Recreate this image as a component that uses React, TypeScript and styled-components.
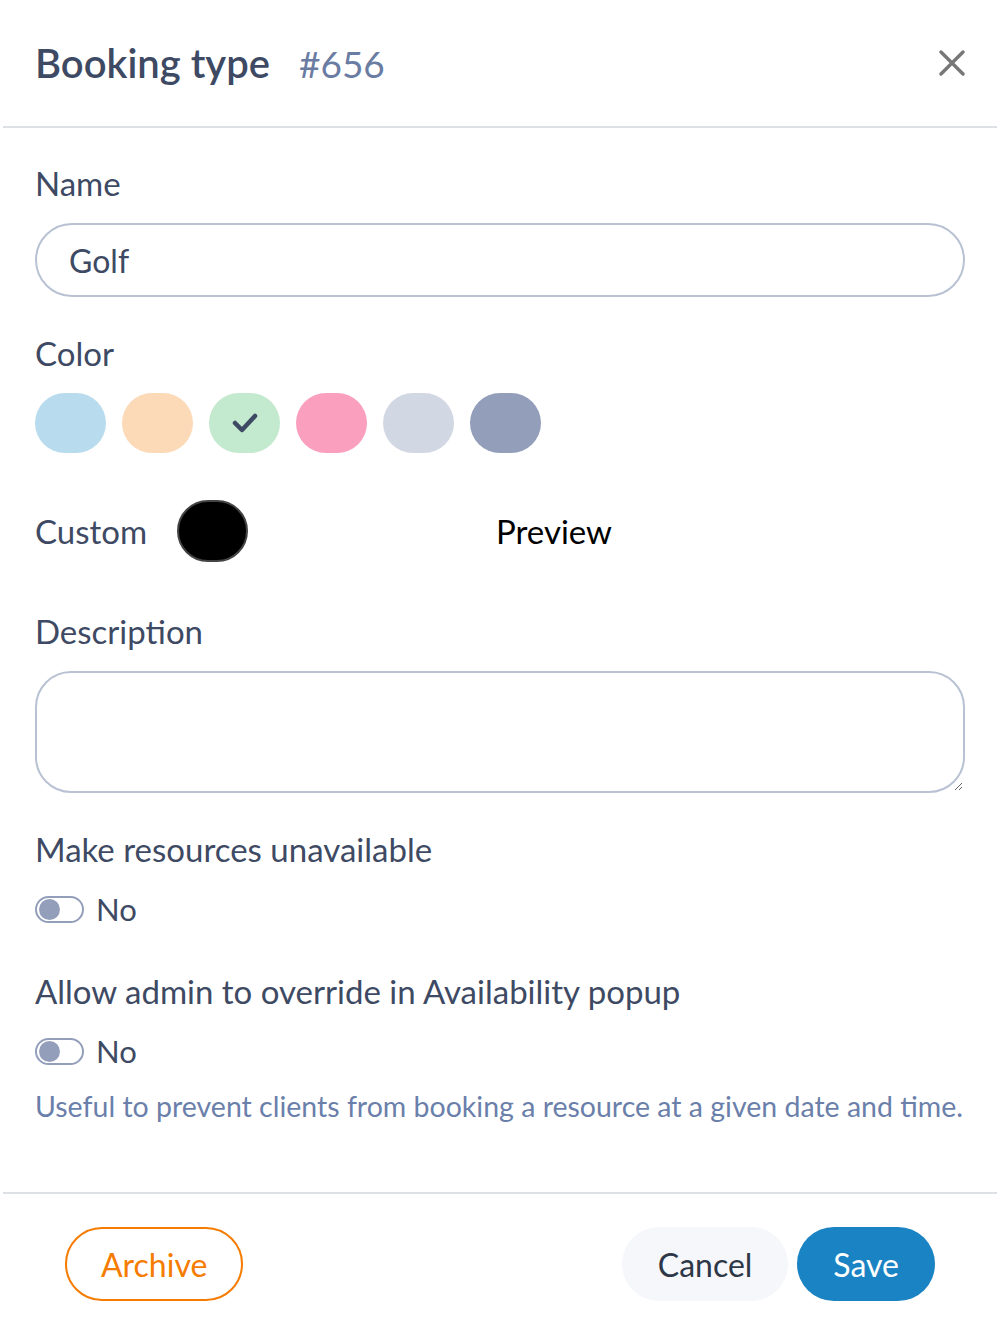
import React from "react";
import styled, { createGlobalStyle } from "styled-components";

const GlobalStyle = createGlobalStyle`
  html, body {
    margin: 0;
    padding: 0;
    background: #ffffff;
  }
  body {
    font-family: Lato, "Noto Sans", sans-serif;
    color: #3e4a63;
  }
  * {
    box-sizing: border-box;
  }
`;

const Modal = styled.div`
  width: 1000px;
  background: #ffffff;
`;

const Header = styled.header`
  height: 126px;
  padding: 0 35px;
  display: flex;
  align-items: center;
  justify-content: space-between;
`;

const TitleGroup = styled.div`
  display: flex;
  align-items: baseline;
  gap: 29px;
`;

const Title = styled.h2`
  margin: 0;
  font-size: 40px;
  font-weight: 600;
  color: #3e4a63;
`;

const TitleId = styled.span`
  font-size: 37px;
  font-weight: 400;
  color: #6b7ca3;
`;

const CloseButton = styled.button`
  border: none;
  background: none;
  padding: 0;
  width: 30px;
  height: 30px;
  margin-right: -2px;
  display: flex;
  align-items: center;
  justify-content: center;
  cursor: pointer;
`;

const Divider = styled.hr`
  margin: 0 3px;
  border: none;
  height: 2px;
  background: #dde1e6;
`;

const Body = styled.div`
  padding: 35px 35px 68px;
  display: flex;
  flex-direction: column;
`;

const Label = styled.div<{ $top?: number }>`
  font-size: 33px;
  line-height: 40px;
  height: 40px;
  color: #3e4a63;
  white-space: nowrap;
  margin-top: ${(p) => p.$top ?? 0}px;
`;

const TextInput = styled.input`
  margin-top: 20px;
  width: 100%;
  height: 74px;
  border: 2px solid #b8c2d3;
  border-radius: 37px;
  padding: 0 32px;
  font-family: inherit;
  font-size: 32px;
  color: #3e4a63;
  outline: none;
  background: #fff;
`;

const Swatches = styled.div`
  margin-top: 20px;
  display: flex;
  gap: 16px;
`;

const Swatch = styled.div<{ $color: string }>`
  width: 71px;
  height: 60px;
  border-radius: 30px;
  background: ${(p) => p.$color};
  display: flex;
  align-items: center;
  justify-content: center;
`;

const CustomRow = styled.div`
  margin-top: 47px;
  display: grid;
  grid-template-columns: 1fr 1fr;
  align-items: center;
`;

const CustomGroup = styled.div`
  display: flex;
  align-items: center;
  gap: 30px;
`;

const CustomLabel = styled.span`
  font-size: 33px;
  color: #3e4a63;
`;

const CustomSwatch = styled.div`
  width: 71px;
  height: 62px;
  border-radius: 31px;
  background: #000;
  border: 2px solid #444;
`;

const Preview = styled.span`
  font-size: 33px;
  color: #000;
  margin-left: -4px;
`;

const TextArea = styled.textarea`
  margin-top: 20px;
  width: 100%;
  height: 122px;
  border: 2px solid #b8c2d3;
  border-radius: 36px;
  padding: 16px 32px;
  font-family: inherit;
  font-size: 31px;
  color: #3e4a63;
  outline: none;
  resize: vertical;
`;

const ToggleRow = styled.div`
  margin-top: 20px;
  height: 40px;
  display: flex;
  align-items: center;
  gap: 12px;
`;

const Toggle = styled.div<{ $on?: boolean }>`
  width: 49px;
  height: 27px;
  border-radius: 14px;
  border: 2px solid #939fba;
  padding: 2px;
  display: flex;
  align-items: center;
  justify-content: ${(p) => (p.$on ? "flex-end" : "flex-start")};
`;

const Knob = styled.span`
  width: 21px;
  height: 21px;
  border-radius: 50%;
  background: #939fba;
  display: block;
`;

const ToggleText = styled.span`
  font-size: 31px;
  color: #3e4a63;
`;

const Helper = styled.p`
  margin: 17px 0 0;
  font-size: 28.5px;
  line-height: 36px;
  color: #6b7fab;
  white-space: nowrap;
`;

const Footer = styled.footer`
  padding: 33px 65px;
  display: flex;
  align-items: center;
  justify-content: space-between;
`;

const Actions = styled.div`
  display: flex;
  gap: 9px;
`;

const Button = styled.button<{ $variant: "outline" | "ghost" | "primary" }>`
  height: 74px;
  border-radius: 37px;
  padding: 0 34px;
  font-family: inherit;
  font-size: 32px;
  cursor: pointer;
  border: 2px solid
    ${(p) => (p.$variant === "outline" ? "#f57c00" : "transparent")};
  background: ${(p) =>
    p.$variant === "primary"
      ? "#1a83c3"
      : p.$variant === "ghost"
        ? "#f5f7fa"
        : "#ffffff"};
  color: ${(p) =>
    p.$variant === "primary"
      ? "#ffffff"
      : p.$variant === "ghost"
        ? "#2d3748"
        : "#f57c00"};
`;

const colors = ["#b8dcee", "#fcdab8", "#c3e9ce", "#fa9fbd", "#d2d8e3", "#939fba"];

export default function App() {
  return (
    <>
      <GlobalStyle />
      <Modal>
        <Header>
          <TitleGroup>
            <Title>Booking type</Title>
            <TitleId>#656</TitleId>
          </TitleGroup>
          <CloseButton aria-label="Close">
            <svg width="26" height="26" viewBox="0 0 26 26">
              <path
                d="M2 2 L24 24 M24 2 L2 24"
                stroke="#777"
                strokeWidth="3.4"
                strokeLinecap="round"
              />
            </svg>
          </CloseButton>
        </Header>
        <Divider />
        <Body>
          <Label>Name</Label>
          <TextInput defaultValue="Golf" />

          <Label $top={36}>Color</Label>
          <Swatches>
            {colors.map((c, i) => (
              <Swatch key={c} $color={c}>
                {i === 2 && (
                  <svg width="26" height="20" viewBox="0 0 26 20">
                    <path
                      d="M3 10 L10 17 L23 3"
                      fill="none"
                      stroke="#3e4a63"
                      strokeWidth="4.5"
                      strokeLinecap="round"
                      strokeLinejoin="round"
                    />
                  </svg>
                )}
              </Swatch>
            ))}
          </Swatches>

          <CustomRow>
            <CustomGroup>
              <CustomLabel>Custom</CustomLabel>
              <CustomSwatch />
            </CustomGroup>
            <Preview>Preview</Preview>
          </CustomRow>

          <Label $top={49}>Description</Label>
          <TextArea />

          <Label $top={36}>Make resources unavailable</Label>
          <ToggleRow>
            <Toggle>
              <Knob />
            </Toggle>
            <ToggleText>No</ToggleText>
          </ToggleRow>

          <Label $top={42}>Allow admin to override in Availability popup</Label>
          <ToggleRow>
            <Toggle>
              <Knob />
            </Toggle>
            <ToggleText>No</ToggleText>
          </ToggleRow>

          <Helper>
            Useful to prevent clients from booking a resource at a given date
            and time.
          </Helper>
        </Body>
        <Divider />
        <Footer>
          <Button $variant="outline">Archive</Button>
          <Actions>
            <Button $variant="ghost">Cancel</Button>
            <Button $variant="primary">Save</Button>
          </Actions>
        </Footer>
      </Modal>
    </>
  );
}
